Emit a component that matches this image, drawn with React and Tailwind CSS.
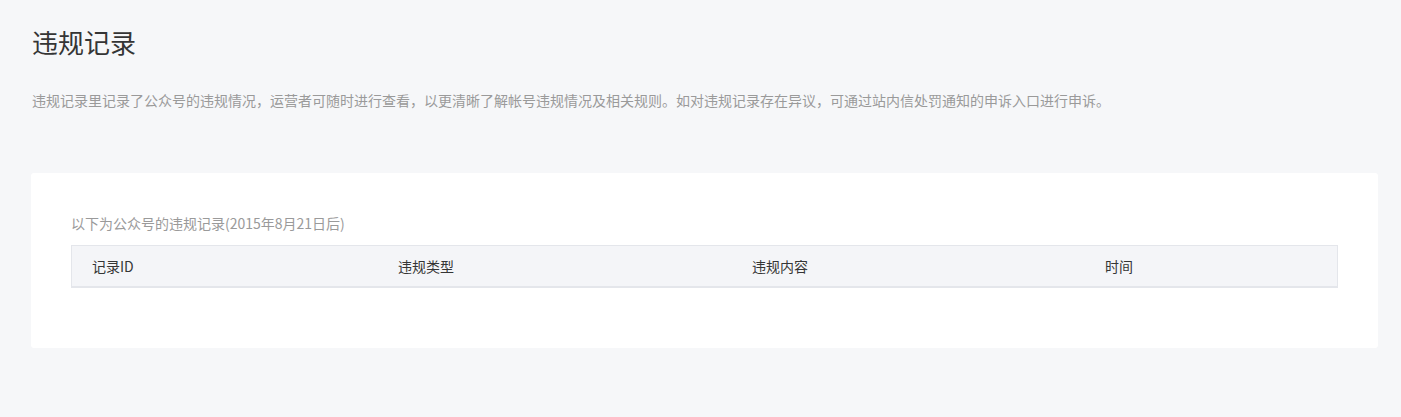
import React from "react";

const columns = [
  { label: "记录ID", width: "w-[306px]" },
  { label: "违规类型", width: "w-[354px]" },
  { label: "违规内容", width: "w-[353px]" },
  { label: "时间", width: "flex-1" },
];

const App = () => {
  return (
    <div
      className="min-h-[417px] bg-[#f6f7f9] pl-[31px] pr-[23px] pt-[24px] pb-[60px]"
      style={{ fontFamily: '"Microsoft YaHei", "Noto Sans CJK SC", "Noto Sans", sans-serif' }}
    >
      {/* Heading */}
      <h2 className="pl-[1px] text-[26px] leading-[36px] text-[#353535] font-normal">违规记录</h2>
      <p className="mt-[29px] pl-[1px] text-[14px] leading-[22px] text-[#9a9a9a]">
        违规记录里记录了公众号的违规情况，运营者可随时进行查看，以更清晰了解帐号违规情况及相关规则。如对违规记录存在异议，可通过站内信处罚通知的申诉入口进行申诉。
      </p>

      {/* Records card */}
      <div className="mt-[62px] bg-white rounded-[3px] px-[40px] pt-[38px] pb-[60px]">
        <div className="text-[14px] leading-[24px] text-[#9a9a9a]">
          以下为公众号的违规记录(2015年8月21日后)
        </div>
        <div className="mt-[10px] flex h-[43px] items-center bg-[#f4f5f8] border border-[#e4e6eb] border-b-2">
          {columns.map((col) => (
            <div key={col.label} className={`${col.width} pl-[20px] text-[14px] text-[#353535]`}>
              {col.label}
            </div>
          ))}
        </div>
      </div>
    </div>
  );
};

export default App;
